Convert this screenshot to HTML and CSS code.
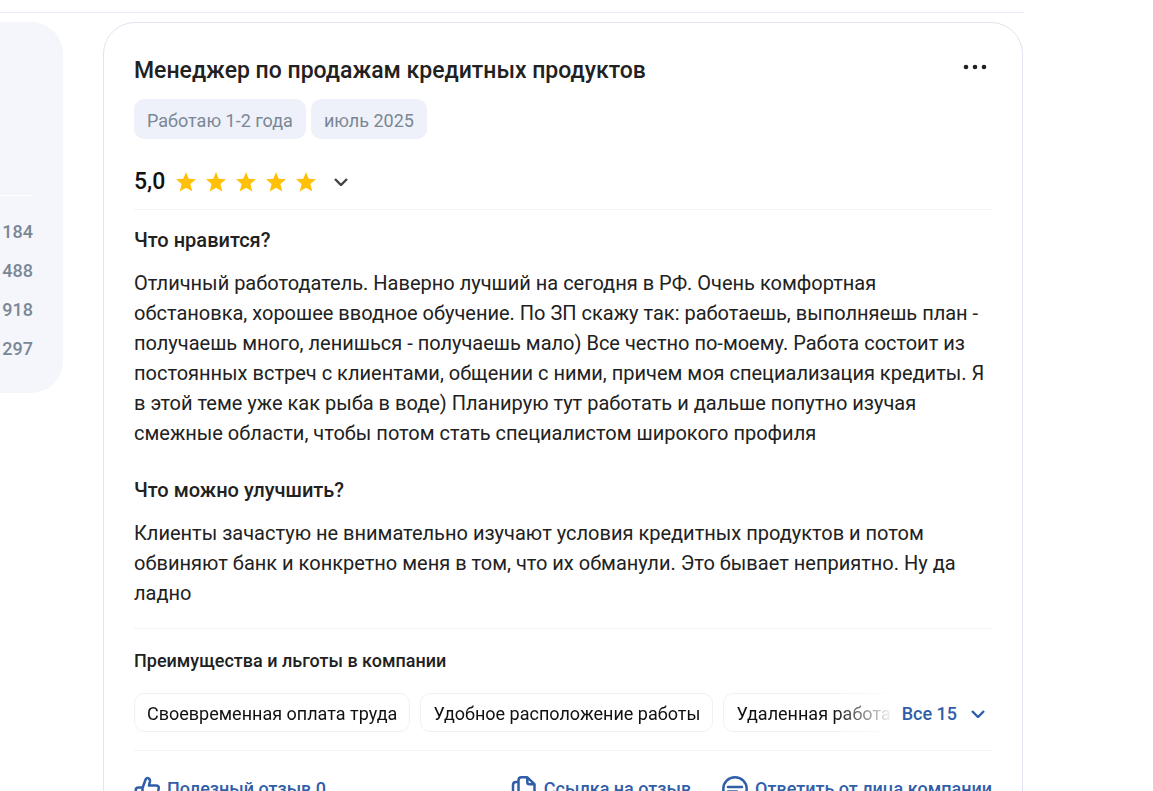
FILE: index.html
```html
<!DOCTYPE html>
<html lang="ru">
<head>
<meta charset="utf-8">
<meta name="viewport" content="width=device-width, initial-scale=1">
<title>Отзыв сотрудника</title>
<link rel="stylesheet" href="styles.css">
</head>
<body>
<svg class="sprite" aria-hidden="true">
  <symbol id="star" viewBox="0 0 20 20"><path d="M10 0l2.700 6.700 7.300.5-5.600 4.700 1.900 7.600L10 15.700 3.700 19.500l1.900-7.600L0 7.200l7.300-.5z" fill="#ffc107"/></symbol>
  <symbol id="chevron" viewBox="0 0 14 8"><path d="M1 1l6 6 6-6" fill="none" stroke="currentColor" stroke-width="2.400"/></symbol>
</svg>
<div class="page">
  <header class="topline"></header>
  <div class="columns">
    <aside class="sidebar">
      <ul class="counts">
        <li>184</li>
        <li>488</li>
        <li>918</li>
        <li>297</li>
      </ul>
    </aside>
    <main class="review">
      <div class="review-head">
        <h1 class="title">Менеджер по продажам кредитных продуктов</h1>
        <button class="more" type="button" aria-label="Ещё">
          <svg width="24" height="6" viewBox="0 0 24 6"><g fill="#212121"><circle cx="3" cy="3" r="2.300"/><circle cx="12" cy="3" r="2.300"/><circle cx="21" cy="3" r="2.300"/></g></svg>
        </button>
      </div>
      <div class="tags">
        <span class="tag">Работаю 1-2 года</span>
        <span class="tag">июль 2025</span>
      </div>
      <div class="rating">
        <span class="score">5,0</span>
        <span class="stars">
          <svg class="star"><use href="#star"/></svg>
          <svg class="star"><use href="#star"/></svg>
          <svg class="star"><use href="#star"/></svg>
          <svg class="star"><use href="#star"/></svg>
          <svg class="star"><use href="#star"/></svg>
        </span>
        <button class="expand" type="button" aria-label="Показать оценки"><svg class="chevron"><use href="#chevron"/></svg></button>
      </div>
      <section class="answers">
        <h2 class="question">Что нравится?</h2>
        <p class="answer">Отличный работодатель. Наверно лучший на сегодня в РФ. Очень комфортная обстановка, хорошее вводное обучение. По ЗП скажу так: работаешь, выполняешь план - получаешь много, ленишься - получаешь мало) Все честно по-моему. Работа состоит из постоянных встреч с клиентами, общении с ними, причем моя специализация кредиты. Я в этой теме уже как рыба в воде) Планирую тут работать и дальше попутно изучая смежные области, чтобы потом стать специалистом широкого профиля</p>
        <h2 class="question">Что можно улучшить?</h2>
        <p class="answer">Клиенты зачастую не внимательно изучают условия кредитных продуктов и потом обвиняют банк и конкретно меня в том, что их обманули. Это бывает неприятно. Ну да ладно</p>
      </section>
      <section class="benefits">
        <h2 class="benefits-title">Преимущества и льготы в компании</h2>
        <div class="benefits-row">
          <ul class="chips">
            <li class="chip">Своевременная оплата труда</li>
            <li class="chip">Удобное расположение работы</li>
            <li class="chip">Удаленная работа</li>
          </ul>
          <button class="all" type="button">Все 15 <svg class="chevron"><use href="#chevron"/></svg></button>
        </div>
      </section>
      <footer class="actions">
        <button class="action useful" type="button">
          <svg class="icon" viewBox="0 0 26 26"><path d="M8.500 12l3-8.200C12 2.300 13 1.800 14.200 2.200c1.500.5 2 1.800 1.700 3.300L15 9.500h7c2.200 0 3 1.400 2.700 3l-1.500 8.500c-.3 2-1.500 3-3.200 3H8.500zM8.500 11.500H4.500c-1.800 0-2.700 1-2.700 2.500v7.500c0 1.500.9 2.500 2.700 2.500h4"/></svg>
          Полезный отзыв 0
        </button>
        <button class="action" type="button">
          <svg class="icon" viewBox="0 0 26 26"><path d="M7.500 4.500c0-2 1-3.200 3-3.200h5.800l7.200 6.900V17c0 2-1 3-3 3h-10c-2 0-3-1-3-3zM16.300 1.500v4.700c0 1.300.7 2 2 2h5M7 6H5C3 6 2 7 2 9v12.500c0 2 1 3 3 3h10c1.500 0 2.500-.7 3-2"/></svg>
          Ссылка на отзыв
        </button>
        <button class="action" type="button">
          <svg class="icon" viewBox="0 0 26 26"><path d="M13 1.300c6.500 0 11.700 5 11.700 11.400S19.500 24.500 13 24.500H2.500L4 20.800C2.300 18.700 1.300 16 1.300 12.700 1.300 6.300 6.500 1.300 13 1.300zM6 11h14M6 15.500h9"/></svg>
          Ответить от лица компании
        </button>
      </footer>
    </main>
  </div>
</div>
</body>
</html>
```

FILE: styles.css
```css
* { box-sizing: border-box; }
body {
  margin: 0;
  height: 100vh;
  overflow: hidden;
  background: #fff;
  color: #212121;
  font-family: Roboto, "Liberation Sans", sans-serif;
  font-size: 20px;
  line-height: 30px;
}
h1, h2, p, ul { margin: 0; padding: 0; }
ul { list-style: none; }
button {
  margin: 0;
  padding: 0;
  border: 0;
  background: none;
  color: inherit;
  font: inherit;
  cursor: pointer;
}
svg { display: block; flex: none; }
.sprite { position: absolute; width: 0; height: 0; }
.page { max-width: 1024px; }
.topline { height: 13px; border-bottom: 1px solid #ebebf5; }
.columns {
  display: flex;
  align-items: flex-start;
  gap: 40px;
  padding: 9px 1px 0 0;
}
.sidebar {
  flex: 0 0 63px;
  padding: 173px 30px 29px 0;
  border-radius: 0 32px 32px 0;
  background: #f4f6fc;
}
.counts {
  display: grid;
  gap: 9px;
  padding-top: 21px;
  border-top: 1px solid #fff;
  color: #7a8794;
  font-size: 18px;
  font-weight: 500;
  text-align: right;
}
.review {
  flex: 1;
  min-width: 0;
  padding: 30px;
  border: 1px solid #dfe4ee;
  border-radius: 32px;
}
.review-head { display: flex; justify-content: space-between; gap: 20px; }
.title { font-size: 23px; font-weight: 500; line-height: 36px; }
.more { height: 28px; padding: 0 5px; }
.tags { display: flex; gap: 5px; margin-top: 10px; }
.tag {
  padding: 7px 13px 3px;
  border-radius: 10px;
  background: #eef1f9;
  color: #7a8794;
  font-size: 18px;
}
.rating {
  display: flex;
  align-items: center;
  padding: 28px 0 12px;
  border-bottom: 1px solid #f4f4f8;
}
.score { font-size: 23px; font-weight: 500; color: #111; }
.stars { display: flex; gap: 10px; margin-left: 11px; }
.star { width: 20px; height: 20px; }
.expand { padding: 8px 18px; color: #444; }
.chevron { width: 14px; height: 8px; }
.answers { padding: 15px 0 20px; border-bottom: 1px solid #f4f4f8; }
.question { font-size: 20px; font-weight: 500; }
.answer { margin-top: 13px; }
.answer + .question { margin-top: 27px; }
.benefits { padding: 17px 0 18px; border-bottom: 1px solid #f4f4f8; }
.benefits-title { font-size: 18px; font-weight: 500; }
.benefits-row { display: flex; align-items: center; margin-top: 17px; }
.chips {
  display: flex;
  flex: 1;
  gap: 10px;
  min-width: 0;
  overflow: hidden;
  mask-image: linear-gradient(to left, transparent, #000 60px);
}
.chip {
  flex: none;
  padding: 6px 12px 3px;
  border: 1px solid #f0f0f8;
  border-radius: 10px;
  color: #111;
  font-size: 18px;
  line-height: 28px;
}
.all {
  display: flex;
  align-items: center;
  gap: 14px;
  padding: 2px 7px 0 8px;
  color: #315ea8;
  font-size: 18px;
  font-weight: 500;
}
.actions { display: flex; gap: 31px; padding-top: 23px; }
.action {
  display: flex;
  align-items: center;
  gap: 7px;
  color: #315ea8;
  font-size: 18px;
  font-weight: 500;
  white-space: nowrap;
}
.useful { margin-right: auto; }
.icon {
  width: 26px;
  height: 26px;
  fill: none;
  stroke: currentColor;
  stroke-width: 2.500;
  stroke-linejoin: round;
  stroke-linecap: round;
}
```
